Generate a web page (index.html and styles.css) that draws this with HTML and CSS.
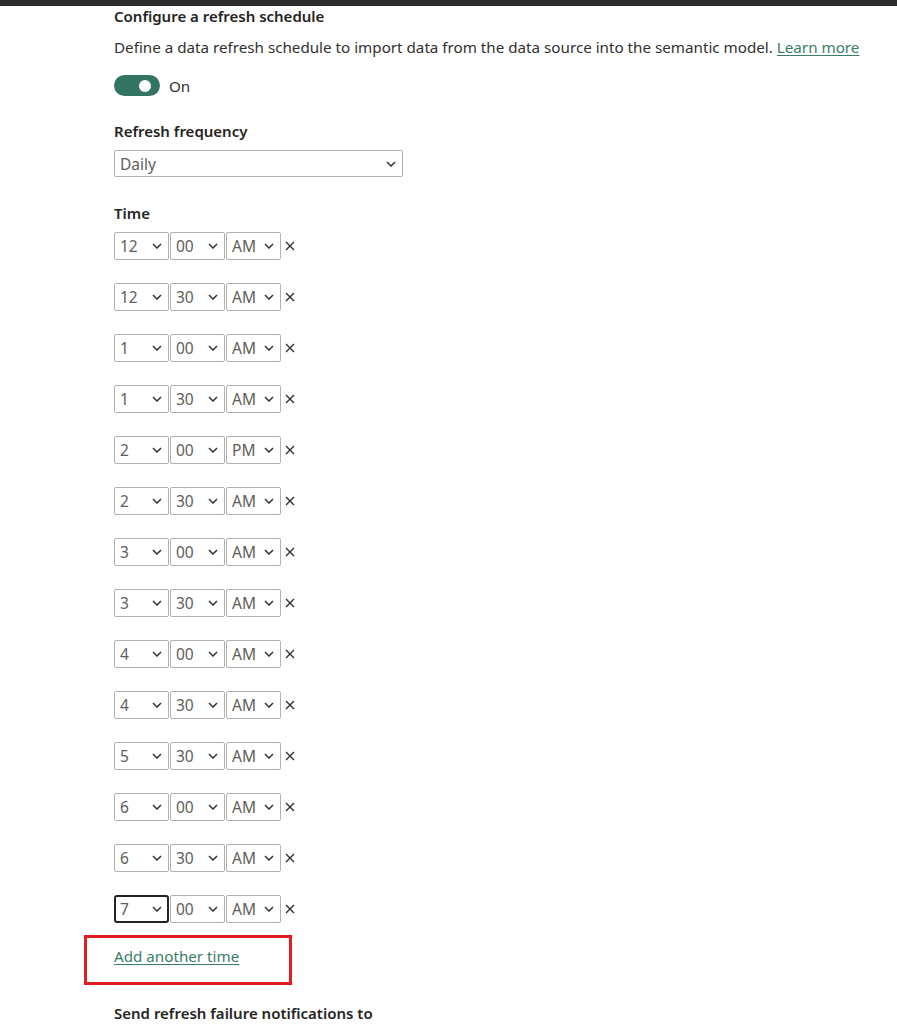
FILE: index.html
```html
<!DOCTYPE html>
<html lang="en">
<head>
    <meta charset="UTF-8">
    <meta name="viewport" content="width=device-width, initial-scale=1.0">
    <title>Refresh schedule</title>
    <link rel="stylesheet" href="styles.css">
</head>
<body>
    <div class="topbar"></div>
    <div class="panel">
        <div class="title">Configure a refresh schedule</div>
        <div class="desc">Define a data refresh schedule to import data from the data source into the semantic model. <a href="#">Learn more</a></div>
        <div class="toggle-row">
            <div class="toggle"><span class="knob"></span></div>
            <span>On</span>
        </div>

        <div class="label">Refresh frequency</div>
        <div class="dropdown wide">Daily<svg viewBox="0 0 10 6"><path d="M1 1l4 4 4-4"/></svg></div>

        <div class="label time-label">Time</div>
        <div id="times"></div>

        <div class="add-box"><a href="#">Add another time</a></div>

        <div class="label notify">Send refresh failure notifications to</div>
    </div>

    <script>
        const times = [
            ['12', '00', 'AM'], ['12', '30', 'AM'], ['1', '00', 'AM'], ['1', '30', 'AM'],
            ['2', '00', 'PM'], ['2', '30', 'AM'], ['3', '00', 'AM'], ['3', '30', 'AM'],
            ['4', '00', 'AM'], ['4', '30', 'AM'], ['5', '30', 'AM'], ['6', '00', 'AM'],
            ['6', '30', 'AM'], ['7', '00', 'AM']
        ];
        const chevron = '<svg viewBox="0 0 10 6"><path d="M1 1l4 4 4-4"/></svg>';
        const list = document.getElementById('times');

        times.forEach((t, i) => {
            const row = document.createElement('div');
            row.className = 'time-row';
            const focus = i === times.length - 1 ? ' focused' : '';
            row.innerHTML =
                '<div class="dropdown hour' + focus + '">' + t[0] + chevron + '</div>' +
                '<div class="dropdown minute">' + t[1] + chevron + '</div>' +
                '<div class="dropdown ampm">' + t[2] + chevron + '</div>' +
                '<svg class="remove" viewBox="0 0 10 10"><path d="M1 1l8 8M9 1l-8 8"/></svg>';
            list.appendChild(row);
        });
    </script>
</body>
</html>
```

FILE: styles.css
```css
body {
    margin: 0;
    font-family: "Noto Sans", "Open Sans", sans-serif;
    font-size: 15.2px;
    color: #323130;
    background: #fff;
}
.topbar {
    height: 6px;
    background: #2b2b2b;
}
.panel {
    padding-left: 114px;
}
.title {
    font-weight: 600;
    font-size: 15px;
    line-height: 22px;
    margin-top: -1px;
    color: #252423;
}
.desc {
    margin-top: 10px;
    line-height: 20px;
    color: #323130;
}
.desc a,
.add-box a {
    color: #3a7d68;
    text-decoration: underline;
    text-underline-offset: 2px;
}
.toggle-row {
    display: flex;
    align-items: center;
    gap: 9px;
    margin-top: 18px;
    height: 21px;
}
.toggle {
    width: 46px;
    height: 21px;
    border-radius: 11px;
    background: #327562;
    display: flex;
    align-items: center;
    justify-content: flex-end;
    padding-right: 9px;
    box-sizing: border-box;
}
.knob {
    width: 12px;
    height: 12px;
    border-radius: 50%;
    background: #fff;
}
.label {
    font-weight: 600;
    font-size: 15px;
    line-height: 20px;
    color: #252423;
    margin-top: 25px;
}
.dropdown {
    display: flex;
    align-items: center;
    justify-content: space-between;
    box-sizing: border-box;
    height: 28px;
    border: 1px solid #b3b0ad;
    border-radius: 2px;
    padding: 0 6px 0 5px;
    color: #605e5c;
    font-size: 15.5px;
    background: #fff;
}
.dropdown svg {
    width: 10px;
    height: 6px;
    fill: none;
    stroke: #323130;
    stroke-width: 1.5;
}
.wide {
    width: 289px;
    margin-top: 9px;
    height: 27px;
}
.time-label {
    margin-top: 26px;
}
#times {
    margin-top: 9px;
}
.time-row {
    display: flex;
    align-items: center;
    gap: 1px;
    margin-bottom: 23px;
}
.hour {
    width: 55px;
}
.minute {
    width: 55px;
}
.ampm {
    width: 55px;
}
.focused {
    border: 2px solid #252423;
    border-radius: 3px;
    padding-left: 4px;
    padding-right: 5px;
}
.remove {
    width: 10px;
    height: 10px;
    margin-left: 3px;
    fill: none;
    stroke: #323130;
    stroke-width: 1.4;
}
.add-box {
    margin-left: -30px;
    margin-top: -11px;
    width: 208px;
    height: 50px;
    box-sizing: border-box;
    border: 3px solid #e31b23;
    padding: 6px 0 0 27px;
    line-height: 24px;
}
.notify {
    margin-top: 18px;
}
```
